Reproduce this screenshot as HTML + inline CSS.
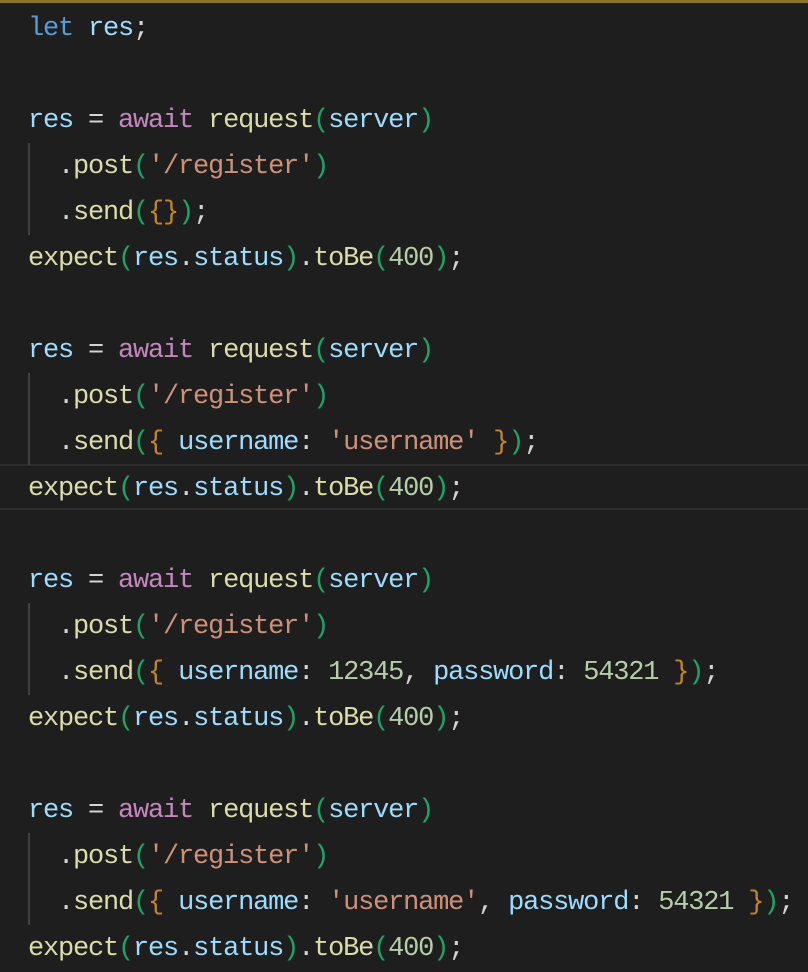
<!DOCTYPE html>
<html><head><meta charset="utf-8"><style>
html,body{margin:0;padding:0;background:#1e1e1e;width:808px;height:966px;overflow:hidden}
.top{position:absolute;left:0;top:0;width:808px;height:4px;background:#1e1e1e;border-top:3px solid #8a7626}
.cur{position:absolute;left:0;top:464px;width:808px;height:42px;border-top:2px solid #2c2c2c;border-bottom:2px solid #2c2c2c}
.g{position:absolute;left:28px;width:2px;background:#404040}
pre{position:absolute;left:28px;top:6px;margin:0;font-family:"Liberation Mono",monospace;font-size:27px;letter-spacing:-1.2px;line-height:46px;color:#d4d4d4}
.k{color:#569cd6}.v{color:#9cdcfe}.a{color:#c586c0}.f{color:#dcdcaa}.s{color:#ce9178}.n{color:#b5cea8}.p{color:#1ea566}.b{color:#c5862b}
</style></head><body>
<div class="top"></div>
<div class="cur"></div>
<div class="g" style="top:143px;height:92px"></div>
<div class="g" style="top:373px;height:92px"></div>
<div class="g" style="top:603px;height:92px"></div>
<div class="g" style="top:833px;height:92px"></div>
<pre><span class="k">let</span> <span class="v">res</span>;

<span class="v">res</span> = <span class="a">await</span> <span class="f">request</span><span class="p">(</span><span class="v">server</span><span class="p">)</span>
  .<span class="f">post</span><span class="p">(</span><span class="s">'/register'</span><span class="p">)</span>
  .<span class="f">send</span><span class="p">(</span><span class="b">{}</span><span class="p">)</span>;
<span class="f">expect</span><span class="p">(</span><span class="v">res</span>.<span class="v">status</span><span class="p">)</span>.<span class="f">toBe</span><span class="p">(</span><span class="n">400</span><span class="p">)</span>;

<span class="v">res</span> = <span class="a">await</span> <span class="f">request</span><span class="p">(</span><span class="v">server</span><span class="p">)</span>
  .<span class="f">post</span><span class="p">(</span><span class="s">'/register'</span><span class="p">)</span>
  .<span class="f">send</span><span class="p">(</span><span class="b">{</span> <span class="v">username</span>: <span class="s">'username'</span> <span class="b">}</span><span class="p">)</span>;
<span class="f">expect</span><span class="p">(</span><span class="v">res</span>.<span class="v">status</span><span class="p">)</span>.<span class="f">toBe</span><span class="p">(</span><span class="n">400</span><span class="p">)</span>;

<span class="v">res</span> = <span class="a">await</span> <span class="f">request</span><span class="p">(</span><span class="v">server</span><span class="p">)</span>
  .<span class="f">post</span><span class="p">(</span><span class="s">'/register'</span><span class="p">)</span>
  .<span class="f">send</span><span class="p">(</span><span class="b">{</span> <span class="v">username</span>: <span class="n">12345</span>, <span class="v">password</span>: <span class="n">54321</span> <span class="b">}</span><span class="p">)</span>;
<span class="f">expect</span><span class="p">(</span><span class="v">res</span>.<span class="v">status</span><span class="p">)</span>.<span class="f">toBe</span><span class="p">(</span><span class="n">400</span><span class="p">)</span>;

<span class="v">res</span> = <span class="a">await</span> <span class="f">request</span><span class="p">(</span><span class="v">server</span><span class="p">)</span>
  .<span class="f">post</span><span class="p">(</span><span class="s">'/register'</span><span class="p">)</span>
  .<span class="f">send</span><span class="p">(</span><span class="b">{</span> <span class="v">username</span>: <span class="s">'username'</span>, <span class="v">password</span>: <span class="n">54321</span> <span class="b">}</span><span class="p">)</span>;
<span class="f">expect</span><span class="p">(</span><span class="v">res</span>.<span class="v">status</span><span class="p">)</span>.<span class="f">toBe</span><span class="p">(</span><span class="n">400</span><span class="p">)</span>;</pre>
</body></html>
